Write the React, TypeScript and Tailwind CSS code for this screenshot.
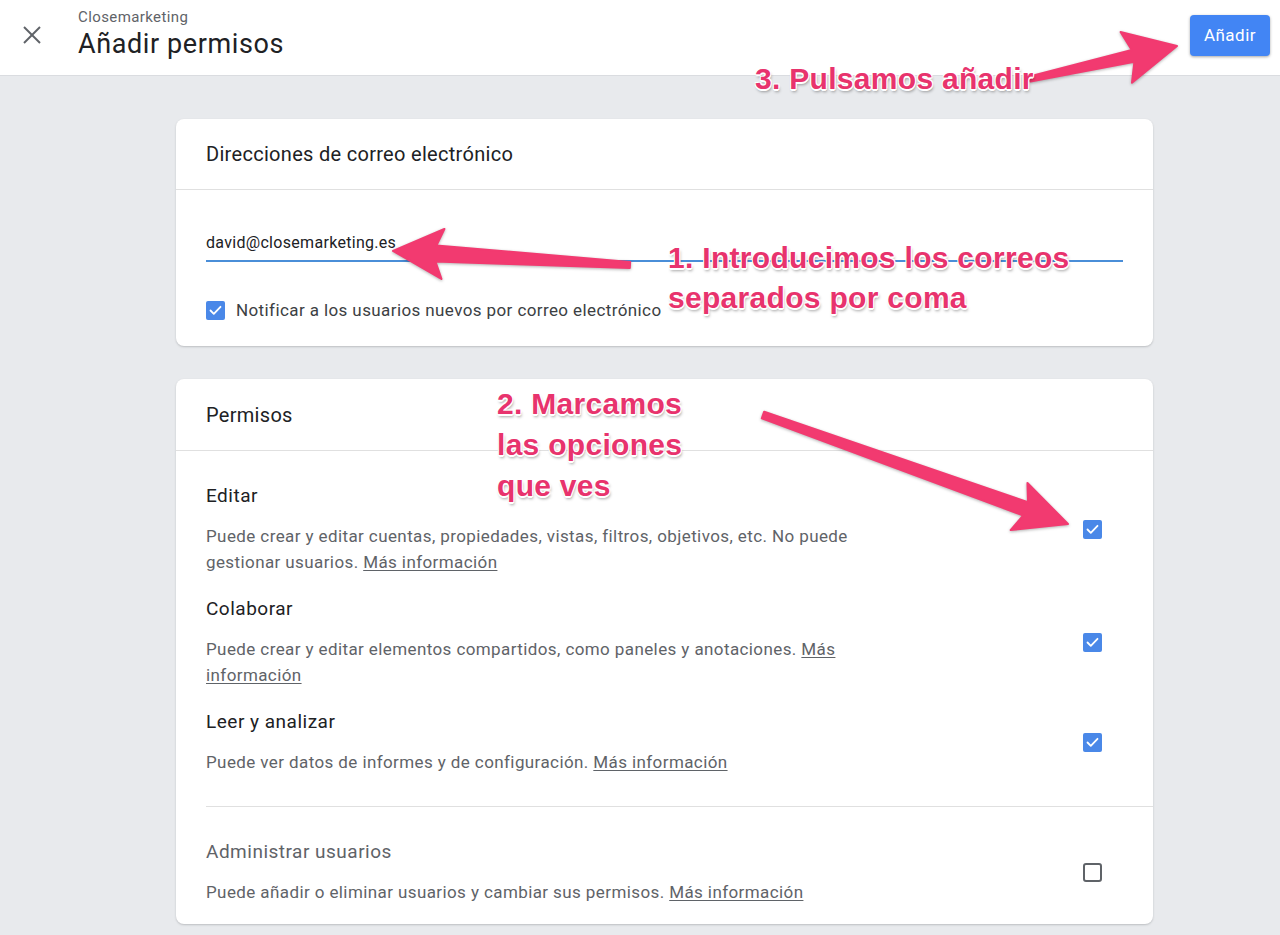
import React from "react";

type Pt = [number, number];

// tapered arrow outline: thin tail, wider neck, triangular head with swept wings
function arrowPoints(tail: Pt, tip: Pt, tailW: number, neckW: number, headW: number, headL: number) {
  const [x1, y1] = tail;
  const [x2, y2] = tip;
  const len = Math.hypot(x2 - x1, y2 - y1);
  const ux = (x2 - x1) / len;
  const uy = (y2 - y1) / len;
  const nx = -uy;
  const ny = ux;
  const bx = x2 - ux * headL;
  const by = y2 - uy * headL;
  const p = (x: number, y: number, w: number, s: number) => `${x + nx * w * s / 2},${y + ny * w * s / 2}`;
  return [
    p(x1, y1, tailW, 1),
    p(bx, by, neckW, 1),
    p(bx - ux * 7, by - uy * 7, headW, 1),
    `${x2},${y2}`,
    p(bx - ux * 7, by - uy * 7, headW, -1),
    p(bx, by, neckW, -1),
    p(x1, y1, tailW, -1),
  ].join(" ");
}

const ARROWS: { tail: Pt; tip: Pt; tailW: number; neckW: number; headW: number; headL: number }[] = [
  { tail: [1030, 79], tip: [1177, 46], tailW: 5, neckW: 12, headW: 52, headL: 45 },
  { tail: [630, 265], tip: [393, 251], tailW: 6, neckW: 16, headW: 50, headL: 43 },
  { tail: [763, 415], tip: [1068, 524], tailW: 7, neckW: 14, headW: 50, headL: 45 },
];

function Checkbox({ checked }: { checked: boolean }) {
  if (!checked) {
    return <div className="w-[19px] h-[19px] rounded-[3px] border-2 border-[#5f6368] shrink-0" />;
  }
  return (
    <div className="w-[19px] h-[19px] rounded-[2px] bg-[#4a88e8] flex items-center justify-center shrink-0">
      <svg width="13" height="11" viewBox="0 0 13 11" fill="none">
        <polyline points="1.5,5.5 4.8,8.8 11.5,1.8" stroke="#fff" strokeWidth="1.8" strokeLinecap="round" strokeLinejoin="round" />
      </svg>
    </div>
  );
}

const PERMS = [
  {
    title: "Editar",
    desc: "Puede crear y editar cuentas, propiedades, vistas, filtros, objetivos, etc. No puede gestionar usuarios.",
    checked: true,
  },
  {
    title: "Colaborar",
    desc: "Puede crear y editar elementos compartidos, como paneles y anotaciones.",
    checked: true,
  },
  {
    title: "Leer y analizar",
    desc: "Puede ver datos de informes y de configuración.",
    checked: true,
  },
];

function PermRow({ title, desc, checked, muted, className }: { title: string; desc: string; checked: boolean; muted?: boolean; className?: string }) {
  return (
    <div className={`flex items-center justify-between pr-[51px] ${className ?? ""}`}>
      <div className="w-[645px]">
        <p className={`text-[19px] tracking-[0.5px] leading-[24px] ${muted ? "text-[#5f6368]" : "text-[#202124]"}`}>{title}</p>
        <p className="mt-[15px] text-[17px] tracking-[0.4px] leading-[26px] text-[#5f6368]">
          {desc} <span className="underline underline-offset-2">Más información</span>
        </p>
      </div>
      <Checkbox checked={checked} />
    </div>
  );
}

const NOTE =
  "absolute font-['Liberation_Sans',Arial,sans-serif] font-bold text-[30px] tracking-[0.3px] text-[#e8336d] whitespace-nowrap [text-shadow:-1px_-1px_0_#fff,1px_-1px_0_#fff,-1px_1px_0_#fff,1px_1px_0_#fff,0_2px_0_#fff,1px_3px_3px_rgba(0,0,0,0.35)]";

export default function App() {
  return (
    <div className="relative w-[1280px] h-[935px] overflow-hidden bg-[#e8eaed] font-['Roboto',sans-serif]">
      {/* Top bar */}
      <header className="h-[76px] bg-white border-b border-[#dadce0] flex items-start">
        <div className="w-[64px] flex justify-center pt-[25px]">
          <svg width="20" height="20" viewBox="0 0 20 20">
            <line x1="2" y1="2" x2="18" y2="18" stroke="#5f6368" strokeWidth="2" />
            <line x1="18" y1="2" x2="2" y2="18" stroke="#5f6368" strokeWidth="2" />
          </svg>
        </div>
        <div className="ml-[14px] pt-[8px]">
          <p className="text-[15px] tracking-[0.4px] leading-[18px] text-[#5f6368]">Closemarketing</p>
          <h1 className="text-[27px] tracking-[0.6px] leading-[36px] text-[#202124]">Añadir permisos</h1>
        </div>
        <button className="ml-auto mr-[10px] mt-[15px] h-[41px] w-[80px] rounded-[4px] bg-[#4285f4] text-white text-[17px] tracking-[0.5px] shadow-[0_1px_3px_rgba(0,0,0,0.35)]">
          Añadir
        </button>
      </header>

      <main className="pt-[43px] pl-[176px]">
        {/* Email card */}
        <section className="w-[977px] bg-white rounded-[8px] shadow-[0_1px_2px_rgba(60,64,67,0.25)]">
          <div className="h-[71px] px-[30px] flex items-center border-b border-[#e0e0e0] text-[20px] tracking-[0.3px] text-[#202124]">
            Direcciones de correo electrónico
          </div>
          <div className="px-[30px] pt-[43px] pb-[26px]">
            <div className="pb-[7px] border-b-2 border-[#4a8ed8] text-[16px] tracking-[0.3px] leading-[20px] text-[#202124]">
              david@closemarketing.es
            </div>
            <label className="mt-[38px] flex items-center gap-[11px] text-[17px] tracking-[0.4px] leading-[20px] text-[#3c4043]">
              <Checkbox checked />
              Notificar a los usuarios nuevos por correo electrónico
            </label>
          </div>
        </section>

        {/* Permissions card */}
        <section className="mt-[33px] w-[977px] bg-white rounded-[8px] shadow-[0_1px_2px_rgba(60,64,67,0.25)]">
          <div className="h-[72px] px-[30px] flex items-center border-b border-[#e0e0e0] text-[20px] tracking-[0.3px] text-[#202124]">
            Permisos
          </div>
          <div className="pl-[30px] pt-[33px] pb-[19px]">
            {PERMS.map((p, i) => (
              <PermRow key={p.title} {...p} className={i > 0 ? "mt-[22px]" : ""} />
            ))}
            <div className="mt-[31px] border-t border-[#e0e0e0]" />
            <PermRow
              className="mt-[33px]"
              title="Administrar usuarios"
              desc="Puede añadir o eliminar usuarios y cambiar sus permisos."
              checked={false}
              muted
            />
          </div>
        </section>
      </main>

      {/* Annotations */}
      <svg className="absolute inset-0 pointer-events-none [filter:drop-shadow(0_1px_1.5px_rgba(0,0,0,0.3))]" width="1280" height="935">
        {ARROWS.map((a, i) => (
          <polygon
            key={i}
            points={arrowPoints(a.tail, a.tip, a.tailW, a.neckW, a.headW, a.headL)}
            fill="#f23a70"
            stroke="#f23a70"
            strokeWidth="2"
            strokeLinejoin="round"
          />
        ))}
      </svg>
      <div className={`${NOTE} left-[755px] top-[61px] leading-[36px]`}>3. Pulsamos añadir</div>
      <div className={`${NOTE} left-[668px] top-[238px] leading-[40px]`}>
        1. Introducimos los correos
        <br />
        separados por coma
      </div>
      <div className={`${NOTE} left-[497px] top-[383px] leading-[41px]`}>
        2. Marcamos
        <br />
        las opciones
        <br />
        que ves
      </div>
    </div>
  );
}
